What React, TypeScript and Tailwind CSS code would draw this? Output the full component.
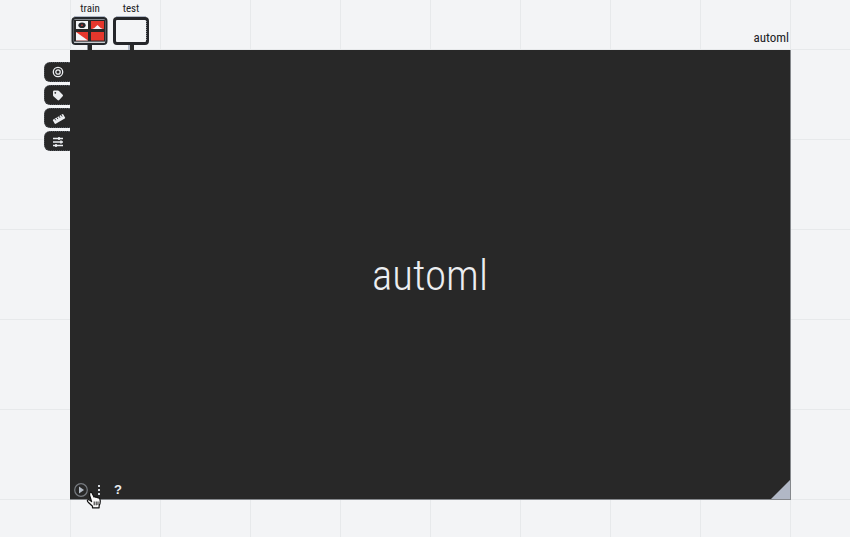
import type { ReactNode } from "react";

function Port({ label, children }: { label: string; children: ReactNode }) {
  return (
    <button type="button" className="flex w-[38px] flex-col items-center">
      <span className="h-4 pt-px text-[11px] leading-4">{label}</span>
      {children}
    </button>
  );
}

function TrainIcon() {
  return (
    <svg width="38" height="34" viewBox="0 0 38 34" aria-hidden="true">
      <path d="M16 27h2v7h-2z" fill="#8b9199" />
      <path d="M17 27h4v7h-4z" fill="#282828" />
      <path d="M3 .5h31" stroke="#b0b8c7" />
      <rect x="1.500" y="2" width="34" height="26" rx="3" fill="#868b91" stroke="#25282c" strokeWidth="2" />
      <path d="M3 26.200h31" stroke="#e8eaed" />
      <rect x="3" y="4" width="31" height="21.500" fill="#282828" />
      <rect x="5" y="5" width="12" height="8" fill="#f3f4f6" />
      <ellipse cx="11" cy="9.200" rx="3.600" ry="2.800" fill="#25282c" />
      <rect x="10" y="8.500" width="2" height="1.500" fill="#a33" />
      <rect x="20" y="5" width="13" height="8" fill="#e5372c" />
      <path d="M21 13q3-1 5.500-4q2.500 3 5.500 4z" fill="#f3f4f6" />
      <rect x="5" y="16" width="12" height="8.500" fill="#e5372c" />
      <path d="M5 16v8.500h12z" fill="#f3f4f6" />
      <rect x="20" y="16" width="13" height="8.500" fill="#e5372c" />
    </svg>
  );
}

function TestIcon() {
  return (
    <svg width="38" height="34" viewBox="0 0 38 34" aria-hidden="true">
      <path d="M16 27h6v7h-6z" fill="#b0b8c7" />
      <path d="M18 27h4v7h-4z" fill="#282828" />
      <path d="M4 .5h30" stroke="#b0b8c7" />
      <rect x="2.500" y="2.500" width="33" height="25" rx="2.500" fill="#f3f4f6" stroke="#25262a" strokeWidth="3" />
      <path d="M34.500 5v20" stroke="#8b9097" strokeDasharray="1 1" />
    </svg>
  );
}

function Tab({ label, children }: { label: string; children: ReactNode }) {
  return (
    <button
      type="button"
      aria-label={label}
      className="flex h-5 w-[26px] items-center rounded-l-md border border-r-0 border-dotted border-[#50555c] bg-[#282828] pl-[7px] text-[#eceef1]"
    >
      {children}
    </button>
  );
}

export default function App() {
  return (
    <main
      className="flex min-h-screen flex-col bg-[#f3f4f6] bg-[linear-gradient(to_right,#e7e9eb_1px,transparent_1px),linear-gradient(to_bottom,#e7e9eb_1px,transparent_1px)] bg-[size:90px_90px] bg-[position:70px_49px] pb-[37px] text-[#202124]"
      style={{ fontFamily: '"Roboto Condensed", Roboto, "Liberation Sans", sans-serif' }}
    >
      <header className="flex h-[50px] items-start justify-between pr-[61px] pl-[71px]">
        <div className="flex gap-[3px]">
          <Port label="train"><TrainIcon /></Port>
          <Port label="test"><TestIcon /></Port>
        </div>
        <h2 className="pt-7 text-[13px] leading-5">automl</h2>
      </header>

      <div className="flex flex-1 pr-[59px] pl-11">
        <nav className="flex flex-col gap-[3px] pt-3">
          <Tab label="Target">
            <svg width="12" height="12" viewBox="0 0 12 12" fill="none" stroke="currentColor">
              <circle cx="6" cy="6" r="4.700" strokeWidth="1.300" />
              <circle cx="6" cy="6" r="2.200" strokeWidth="1.300" />
            </svg>
          </Tab>
          <Tab label="Tags">
            <svg width="12" height="12" viewBox="0 0 12 12" fill="currentColor">
              <path fillRule="evenodd" d="M1 2.700Q1 1.500 2.200 1.500H6q.6 0 1 .4l3.700 3.900q.7.700 0 1.500l-3.500 3.700q-.8.800-1.600 0L1.400 7.200Q1 6.800 1 6.300zM3.300 2.900a.9.900 0 1 0 0 1.800a.9.900 0 1 0 0-1.800z" />
            </svg>
          </Tab>
          <Tab label="Size">
            <svg width="14" height="14" viewBox="0 0 14 14">
              <g transform="rotate(-30 7 8)">
                <rect x="1" y="5.500" width="12" height="5" rx=".8" fill="currentColor" />
                <path d="M3.500 5.500v2M6 5.500v2M8.500 5.500v2M11 5.500v2" stroke="#282828" strokeWidth=".8" />
              </g>
            </svg>
          </Tab>
          <Tab label="Settings">
            <svg width="12" height="12" viewBox="0 0 12 12" fill="none" stroke="currentColor" strokeWidth="1.400">
              <path d="M1 3.500h10M1 7h10M1 10.500h10" />
              <path d="M7 2v3M9 5.500v3M4 9v3" strokeWidth="1.600" />
            </svg>
          </Tab>
        </nav>

        <section className="flex flex-1 flex-col border-r border-b border-[#85888c] bg-[#282828] text-[#eceef1]">
          <div className="flex flex-1 items-center justify-center pt-[21px]">
            <h1 className="text-[43px] leading-none font-light">automl</h1>
          </div>
          <footer className="flex h-5 items-end justify-between">
            <div className="relative flex h-5 items-center gap-2 pt-0.5 pl-1">
              <button type="button" aria-label="Run">
                <svg className="block" width="14" height="14" viewBox="0 0 14 14">
                  <circle cx="7" cy="7" r="6.300" fill="none" stroke="#777b80" strokeWidth="1.200" />
                  <path d="M5 3.500v7L10 7z" fill="#b4bbc6" />
                </svg>
              </button>
              <button type="button" aria-label="More" className="w-[6px]">
                <svg className="block" width="6" height="10" viewBox="0 0 6 10" fill="#d4d8de">
                  <path d="M2 0h2v2H2zM2 4h2v2H2zM2 8h2v2H2z" />
                </svg>
              </button>
              <button type="button" className="w-4 font-['Liberation_Sans'] text-[13px] leading-4 font-bold">?</button>
              <svg className="absolute top-3 left-4" width="16" height="18" viewBox="0 0 16 18" aria-hidden="true">
                <path
                  d="M3.700 2.200Q4.700.3 6 1.900L8 6q1.100-.8 2 .4q1.200-.7 2 .5q1.300-.4 1.800.9q.9 2.200.2 4.700l-.9 2.300v2H6.500v-1.500L2.200 11.200Q.8 9.600 1.700 8.900q1.100-.8 2.600.6l1.300 1.100L3.600 4.200z"
                  fill="#fafafa"
                  stroke="#111"
                  strokeWidth="1.200"
                  strokeLinejoin="round"
                />
                <path d="M8.200 10.500v3.800M10.200 10.500v3.800M12 10.500v3.500" stroke="#222" />
              </svg>
            </div>
            <svg width="19" height="19" viewBox="0 0 19 19" aria-hidden="true">
              <path d="M19 0v19H0z" fill="#b1b8c6" />
            </svg>
          </footer>
        </section>
      </div>
    </main>
  );
}
